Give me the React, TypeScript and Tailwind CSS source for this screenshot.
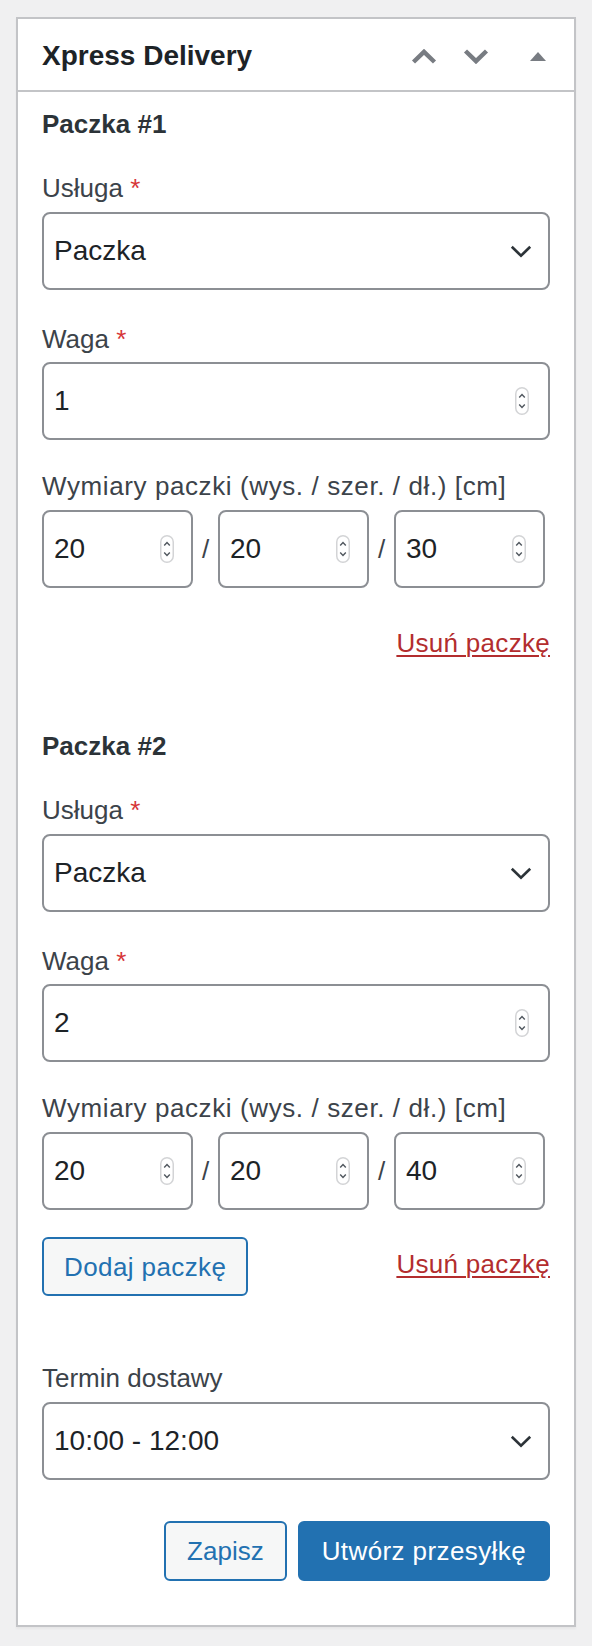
import type { ReactNode } from "react";

type Parcel = {
  weight: string;
  dims: [string, string, string];
};

const parcels: Parcel[] = [
  { weight: "1", dims: ["20", "20", "30"] },
  { weight: "2", dims: ["20", "20", "40"] }
];

function ChevronUp() {
  return (
    <svg width="26" height="15" viewBox="0 0 26 15" aria-hidden>
      <polyline points="2.5,13 13,2.8 23.5,13" fill="none" stroke="#787c82" strokeWidth="4.4" />
    </svg>
  );
}

function ChevronDown() {
  return (
    <svg width="26" height="15" viewBox="0 0 26 15" aria-hidden>
      <polyline points="2.5,2 13,12.2 23.5,2" fill="none" stroke="#787c82" strokeWidth="4.4" />
    </svg>
  );
}

function TriangleUp() {
  return (
    <svg width="16" height="9" viewBox="0 0 16 9" aria-hidden>
      <polygon points="0,9 8,0 16,9" fill="#787c82" />
    </svg>
  );
}

function SelectChevron() {
  return (
    <svg width="22" height="13" viewBox="0 0 22 13" aria-hidden className="shrink-0">
      <polyline points="1.8,1.8 11,10.8 20.2,1.8" fill="none" stroke="#2c3338" strokeWidth="2.6" />
    </svg>
  );
}

function Spinner() {
  return (
    <svg width="14" height="28" viewBox="0 0 14 28" aria-hidden className="shrink-0">
      <rect x="0.75" y="0.75" width="12.5" height="26.5" rx="6.25" fill="#fff" stroke="#d3d4d6" strokeWidth="1.5" />
      <polyline points="4.2,10.6 7,7.6 9.8,10.6" fill="none" stroke="#50575e" strokeWidth="1.4" />
      <polyline points="4.2,17.4 7,20.4 9.8,17.4" fill="none" stroke="#50575e" strokeWidth="1.4" />
    </svg>
  );
}

function Label({ children, required, className }: { children: ReactNode; required?: boolean; className: string }) {
  return (
    <p className={`text-[26px] leading-[36px] text-[#3c434a] ${className}`}>
      {children}
      {required ? <span className="text-[#d63638]"> *</span> : null}
    </p>
  );
}

function SelectBox({ value, className }: { value: string; className: string }) {
  return (
    <div
      className={`flex h-[78px] items-center justify-between rounded-[8px] border-2 border-[#8c8f94] bg-white pl-[10px] pr-[16px] ${className}`}
    >
      <span className="text-[28px] leading-[36px] text-[#1d2327]">{value}</span>
      <SelectChevron />
    </div>
  );
}

function NumberBox({ value, small }: { value: string; small?: boolean }) {
  return (
    <div
      className={
        small
          ? "flex h-[78px] w-[151px] items-center justify-between rounded-[8px] border-2 border-[#8c8f94] bg-white pl-[10px] pr-[17px]"
          : "flex h-[78px] items-center justify-between rounded-[8px] border-2 border-[#8c8f94] bg-white pl-[10px] pr-[19px]"
      }
    >
      <span className="text-[28px] leading-[36px] text-[#1d2327]">{value}</span>
      <Spinner />
    </div>
  );
}

function RemoveLink({ className }: { className: string }) {
  return (
    <a
      href="#"
      className={`text-[26px] leading-[36px] tracking-[0.3px] text-[#b32d2e] underline decoration-2 underline-offset-[3px] ${className}`}
    >
      Usuń paczkę
    </a>
  );
}

function ParcelBlock({ parcel, index, last }: { parcel: Parcel; index: number; last: boolean }) {
  return (
    <section className={index === 0 ? "" : "mt-[67px]"}>
      <h4 className="text-[26px] font-bold leading-[36px] text-[#2c3338]">Paczka #{index + 1}</h4>

      <Label required className="mt-[28px]">Usługa</Label>
      <SelectBox value="Paczka" className="mt-[6px]" />

      <Label required className="mt-[31px]">Waga</Label>
      <div className="mt-[5px]">
        <NumberBox value={parcel.weight} />
      </div>

      <Label className="mt-[28px] tracking-[0.6px]">Wymiary paczki (wys. / szer. / dł.) [cm]</Label>
      <div className="mt-[6px] flex items-center">
        <NumberBox value={parcel.dims[0]} small />
        <span className="w-[25px] text-center text-[26px] leading-[36px] text-[#3c434a]">/</span>
        <NumberBox value={parcel.dims[1]} small />
        <span className="w-[25px] text-center text-[26px] leading-[36px] text-[#3c434a]">/</span>
        <NumberBox value={parcel.dims[2]} small />
      </div>

      {last ? (
        <div className="mt-[27px] flex items-start justify-between">
          <button className="h-[59px] rounded-[6px] border-2 border-[#2271b1] bg-[#f6f7f7] px-[20px] text-[26px] leading-[36px] tracking-[0.4px] text-[#2271b1]">
            Dodaj paczkę
          </button>
          <RemoveLink className="mt-[9px]" />
        </div>
      ) : (
        <div className="mt-[37px] flex justify-end">
          <RemoveLink className="" />
        </div>
      )}
    </section>
  );
}

export default function App() {
  return (
    <div className="min-h-screen bg-[#f0f0f1] px-4 pb-[19px] pt-[17px] font-['Liberation_Sans',Arial,sans-serif]">
      <div className="border-2 border-[#c3c4c7] bg-white shadow-[0_2px_2px_rgba(0,0,0,0.04)]">
        <div className="flex h-[73px] items-center justify-between border-b-2 border-[#c3c4c7] pl-[24px]">
          <h2 className="pt-[3px] text-[28px] font-bold leading-[36px] text-[#1d2327]">Xpress Delivery</h2>
          <div className="flex h-full pt-[3px]">
            <button aria-label="Przesuń w górę" className="flex w-[52px] items-center justify-center">
              <ChevronUp />
            </button>
            <button aria-label="Przesuń w dół" className="flex w-[52px] items-center justify-center">
              <ChevronDown />
            </button>
            <button aria-label="Zwiń panel" className="flex w-[72px] items-center justify-center">
              <TriangleUp />
            </button>
          </div>
        </div>

        <div className="px-[24px] pb-[44px] pt-[14px]">
          {parcels.map((parcel, i) => (
            <ParcelBlock key={i} parcel={parcel} index={i} last={i === parcels.length - 1} />
          ))}

          <Label className="mt-[64px]">Termin dostawy</Label>
          <SelectBox value="10:00 - 12:00" className="mt-[6px]" />

          <div className="mt-[41px] flex justify-end gap-[11px]">
            <button className="h-[60px] rounded-[6px] border-2 border-[#2271b1] bg-[#f6f7f7] px-[21px] text-[26px] leading-[36px] text-[#2271b1]">
              Zapisz
            </button>
            <button className="h-[60px] rounded-[6px] border-2 border-[#2271b1] bg-[#2271b1] px-[22px] text-[26px] leading-[36px] tracking-[0.4px] text-white">
              Utwórz przesyłkę
            </button>
          </div>
        </div>
      </div>
    </div>
  );
}
